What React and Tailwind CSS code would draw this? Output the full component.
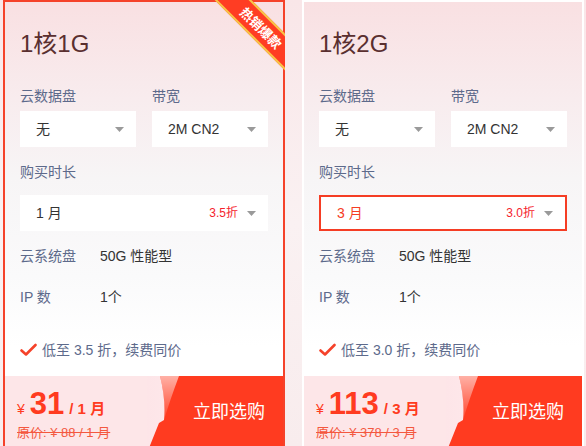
import React from "react";

const plans = [
  {
    name: "1核1G",
    disk: "无",
    bandwidth: "2M CN2",
    period: "1 月",
    discount: "3.5折",
    note: "低至 3.5 折，续费同价",
    price: "31",
    unit: "/ 1 月",
    original: "原价: ¥ 88 / 1 月",
    active: true,
    hot: true,
  },
  {
    name: "1核2G",
    disk: "无",
    bandwidth: "2M CN2",
    period: "3 月",
    discount: "3.0折",
    note: "低至 3.0 折，续费同价",
    price: "113",
    unit: "/ 3 月",
    original: "原价: ¥ 378 / 3 月",
    active: false,
    hot: false,
    focused: true,
  },
];

function Arrow() {
  return (
    <svg width="9" height="5" viewBox="0 0 9 5" className="shrink-0">
      <path d="M0 0 H9 L4.5 5 Z" fill="#9a9a9a" />
    </svg>
  );
}

function Select({ value, extra, focused }) {
  return (
    <div
      className={
        "flex h-[36px] items-center bg-white pl-[16px] pr-[12px] text-[14px] " +
        (focused ? "border-2 border-[#f53d24] pl-[14px] pr-[10px] text-[#f53d24]" : "text-[#333]")
      }
    >
      <span className="flex-1">{value}</span>
      {extra && <span className="mr-[9px] text-[12px] text-[#f5222d]">{extra}</span>}
      <Arrow />
    </div>
  );
}

function BuyButton() {
  return (
    <div className="relative flex w-[136px] items-center justify-center pl-[28px]">
      <svg className="absolute inset-0" width="136" height="72" viewBox="0 0 136 72">
        <defs>
          <linearGradient id="sweep" x1="0" y1="0" x2="0" y2="1">
            <stop offset="0" stopColor="#ffffff" stopOpacity="0.6" />
            <stop offset="1" stopColor="#ffffff" stopOpacity="0.05" />
          </linearGradient>
          <linearGradient id="left" x1="0" y1="0" x2="1" y2="0">
            <stop offset="0" stopColor="#fde5e8" />
            <stop offset="1" stopColor="#fff3f4" />
          </linearGradient>
        </defs>
        <rect width="136" height="72" fill="url(#left)" />
        <path d="M13 0 Q19 24 17 44 L12 47 L2 72 H136 V0 Z" fill="#ff3b20" />
        <path d="M13 0 H32 Q23 24 17 44 Q19 24 13 0 Z" fill="url(#sweep)" />
      </svg>
      <span className="relative text-[18px] text-white">立即选购</span>
    </div>
  );
}

function PlanCard({ plan }) {
  return (
    <div
      className={
        "relative w-[282px] shrink-0 border-2 bg-[linear-gradient(180deg,#f9e0e2_0%,#f8ecee_22%,#f7f5f6_40%,#fafafb_62%,#ffffff_78%)] " +
        (plan.active ? "border-[#f5422a]" : "border-white")
      }
    >
      {plan.hot && (
        <div className="absolute right-[-2px] top-[-2px] h-[80px] w-[80px] overflow-hidden">
          <div className="absolute left-[1px] top-[15px] flex h-[26px] w-[110px] rotate-45 items-center justify-center border-y-2 border-[#f7c548] bg-[#ff3d23] text-white">
            <span className="text-[13px] font-bold leading-none">热销爆款</span>
          </div>
        </div>
      )}

      <div className="px-[15px] pt-[26px]">
        <div className="text-[24px] leading-[32px] text-[#5a2f2f]">{plan.name}</div>

        <div className="mt-[26px] grid grid-cols-2 gap-x-4">
          <div>
            <div className="text-[14px] leading-[20px] text-[#5d6a8b]">云数据盘</div>
            <div className="mt-[5px]">
              <Select value={plan.disk} />
            </div>
          </div>
          <div>
            <div className="text-[14px] leading-[20px] text-[#5d6a8b]">带宽</div>
            <div className="mt-[5px]">
              <Select value={plan.bandwidth} />
            </div>
          </div>
        </div>

        <div className="mt-[15px] text-[14px] leading-[20px] text-[#5d6a8b]">购买时长</div>
        <div className="mt-[13px]">
          <Select value={plan.period} extra={plan.discount} focused={plan.focused} />
        </div>

        <div className="mt-[15px] flex text-[14px] leading-[20px]">
          <span className="w-[80px] text-[#5d6a8b]">云系统盘</span>
          <span className="text-[#333]">50G 性能型</span>
        </div>
        <div className="mt-[21px] flex text-[14px] leading-[20px]">
          <span className="w-[80px] text-[#5d6a8b]">IP 数</span>
          <span className="text-[#333]">1个</span>
        </div>

        <div className="mt-[33px] flex items-center text-[14px] leading-[20px] text-[#5d6a8b]">
          <svg width="17" height="14" viewBox="0 0 17 14" className="mr-[5px]">
            <path d="M1.5 7.5 L6 11.5 L15.5 2" fill="none" stroke="#f5422a" strokeWidth="2.6" strokeLinecap="round" strokeLinejoin="round" />
          </svg>
          {plan.note}
        </div>
      </div>

      <div className="mt-[16px] flex h-[72px]">
        <div className="flex-1 bg-[#fde6e8] pl-[12px] pt-[13px]">
          <div className="flex items-baseline font-bold text-[#ff3b20]">
            <span className="text-[14px] font-normal">¥</span>
            <span className="ml-[5px] text-[31px] leading-[30px]">{plan.price}</span>
            <span className="ml-[5px] text-[15px]">{plan.unit}</span>
          </div>
          <div className="mt-[4px] text-[13px] leading-[16px] text-[#f4583f] line-through">{plan.original}</div>
        </div>
        <BuyButton />
      </div>
    </div>
  );
}

export default function App() {
  return (
    <div
      className="flex h-[446px] gap-[17px] overflow-hidden bg-[linear-gradient(180deg,#f9e6e8_0%,#faf1f2_50%,#f8eced_100%)] pl-[3px]"
      style={{ fontFamily: '"Liberation Sans", "Noto Sans CJK SC", sans-serif' }}
    >
      {plans.map((plan) => (
        <PlanCard key={plan.name} plan={plan} />
      ))}
    </div>
  );
}
